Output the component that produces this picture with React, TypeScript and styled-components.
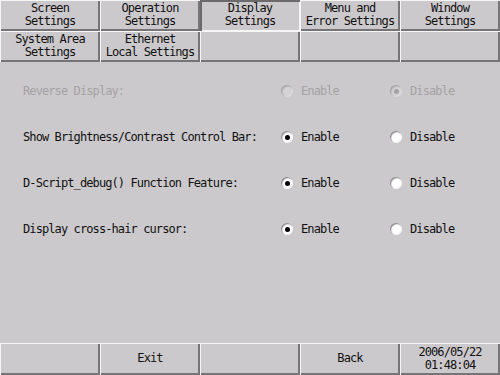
import React from 'react';
import styled, { createGlobalStyle, css } from 'styled-components';

const GlobalStyle = createGlobalStyle`
  html, body {
    margin: 0;
    padding: 0;
    background: #ccc9cc;
  }
  body {
    font-family: "DejaVu Sans Mono", "Liberation Mono", monospace;
  }
`;

const Screen = styled.div`
  width: 500px;
  height: 375px;
  display: flex;
  flex-direction: column;
  background: #ccc9cc;
  color: #111;
  font-size: 12px;
  letter-spacing: -0.9px;
  overflow: hidden;
`;

const TabGrid = styled.div`
  display: grid;
  grid-template-columns: repeat(5, 100px);
  grid-template-rows: 31px 31px;
`;

const bevel = css`
  box-shadow: inset 1px 1px 0 #f6f6f6, inset -2px -2px 0 #767476;
`;

const Tab = styled.div<{ $active?: boolean }>`
  display: flex;
  align-items: center;
  justify-content: center;
  text-align: center;
  line-height: 13px;
  padding-bottom: 1px;
  background: #ccc9cc;
  ${bevel}
  ${(p) =>
    p.$active &&
    css`
      box-shadow: inset 2px 2px 0 #6c6a6c, inset -1px -1px 0 #f6f6f6;
    `}
`;

const Body = styled.div`
  flex: 1;
  display: grid;
  grid-template-columns: 258px 109px 1fr;
  grid-auto-rows: 46px;
  align-content: start;
  padding: 6px 0 0 23px;
`;

const Label = styled.div<{ $disabled?: boolean }>`
  display: flex;
  align-items: center;
  color: ${(p) => (p.$disabled ? '#a4a2a4' : '#111')};
`;

const Option = styled.div<{ $disabled?: boolean }>`
  display: flex;
  align-items: center;
  gap: 8px;
  color: ${(p) => (p.$disabled ? '#a4a2a4' : '#111')};
`;

const Circle = styled.span<{ $disabled?: boolean }>`
  position: relative;
  width: 12px;
  height: 12px;
  border-radius: 50%;
  flex: none;
  background: ${(p) =>
    p.$disabled
      ? 'radial-gradient(circle at 60% 60%, #d4d2d4 40%, #bdbbbd 75%)'
      : 'radial-gradient(circle at 60% 60%, #ffffff 45%, #e2e0e2 70%)'};
  box-shadow: ${(p) =>
    p.$disabled
      ? 'inset 1px 1px 1px #a6a4a6, inset -1px -1px 0 #dcdadc'
      : 'inset 1px 1px 1px #8a888a, inset -1px -1px 0 #f4f4f4'};
`;

const Dot = styled.span<{ $disabled?: boolean }>`
  position: absolute;
  left: 3.5px;
  top: 3.5px;
  width: 5px;
  height: 5px;
  border-radius: 50%;
  background: ${(p) => (p.$disabled ? '#a4a2a4' : '#000')};
`;

const BottomBar = styled.div`
  display: grid;
  grid-template-columns: repeat(5, 100px);
  height: 32px;
`;

const BarButton = styled.div`
  display: flex;
  align-items: center;
  justify-content: center;
  text-align: center;
  line-height: 13px;
  padding-bottom: 1px;
  background: #ccc9cc;
  ${bevel}
`;

function Radio({ checked, disabled, label }: { checked: boolean; disabled?: boolean; label: string }) {
  return (
    <Option $disabled={disabled}>
      <Circle $disabled={disabled}>{checked && <Dot $disabled={disabled} />}</Circle>
      {label}
    </Option>
  );
}

const rows = [
  { label: 'Reverse Display:', enable: false, disabled: true },
  { label: 'Show Brightness/Contrast Control Bar:', enable: true },
  { label: 'D-Script_debug() Function Feature:', enable: true },
  { label: 'Display cross-hair cursor:', enable: true },
];

const tabs: { text: React.ReactNode; active?: boolean }[] = [
  { text: <>Screen<br />Settings</> },
  { text: <>Operation<br />Settings</> },
  { text: <>Display<br />Settings</>, active: true },
  { text: <>Menu and<br />Error Settings</> },
  { text: <>Window<br />Settings</> },
  { text: <>System Area<br />Settings</> },
  { text: <>Ethernet<br />Local Settings</> },
  { text: null },
  { text: null },
  { text: null },
];

export default function App() {
  return (
    <Screen>
      <GlobalStyle />
      <TabGrid>
        {tabs.map((t, i) => (
          <Tab key={i} $active={t.active}>
            {t.text}
          </Tab>
        ))}
      </TabGrid>
      <Body>
        {rows.map((r) => (
          <React.Fragment key={r.label}>
            <Label $disabled={r.disabled}>{r.label}</Label>
            <Radio checked={r.enable} disabled={r.disabled} label="Enable" />
            <Radio checked={!r.enable} disabled={r.disabled} label="Disable" />
          </React.Fragment>
        ))}
      </Body>
      <BottomBar>
        <BarButton />
        <BarButton>Exit</BarButton>
        <BarButton />
        <BarButton>Back</BarButton>
        <BarButton>
          2006/05/22
          <br />
          01:48:04
        </BarButton>
      </BottomBar>
    </Screen>
  );
}
